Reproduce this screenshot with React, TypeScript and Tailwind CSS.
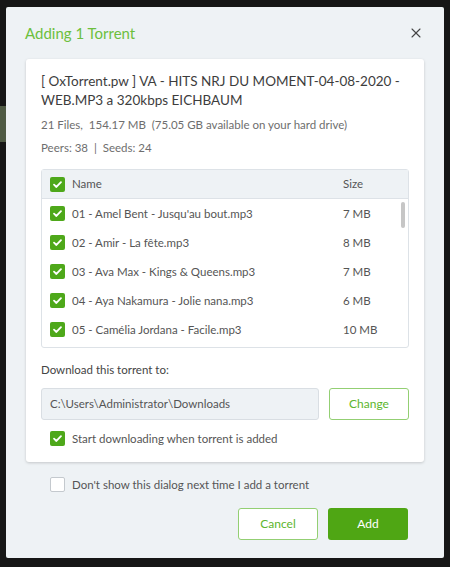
import { X } from "lucide-react";

const files = [
	{ name: "01 - Amel Bent - Jusqu'au bout.mp3", size: "7 MB" },
	{ name: "02 - Amir - La fête.mp3", size: "8 MB" },
	{ name: "03 - Ava Max - Kings & Queens.mp3", size: "7 MB" },
	{ name: "04 - Aya Nakamura - Jolie nana.mp3", size: "6 MB" },
	{ name: "05 - Camélia Jordana - Facile.mp3", size: "10 MB" },
];

const Check = ({ on = true }: { on?: boolean }) =>
	on ? (
		<span className="flex h-[15px] w-[15px] shrink-0 items-center justify-center rounded-[2px] bg-[#4ea81a]">
			<svg width="11" height="11" viewBox="0 0 12 12" fill="none">
				<path d="M2.2 6.2 4.8 8.7 9.8 3.4" stroke="white" strokeWidth="2" strokeLinecap="round" strokeLinejoin="round" />
			</svg>
		</span>
	) : (
		<span className="h-[15px] w-[15px] shrink-0 rounded-[2px] border border-[#c4c9ce] bg-white" />
	);

export default function App() {
	return (
		<div className="relative h-[567px] w-[450px] overflow-hidden bg-[#161616] font-['Lato',sans-serif]">
			{/* bit of the app behind the dialog */}
			<div className="absolute left-0 top-[106px] h-[36px] w-[6px] bg-[#4f5a44]" />

			<div className="ml-[6px] mt-[7px] flex h-[551px] w-[438px] flex-col rounded-[2px] bg-[#eef2f5]">
				<div className="flex h-[52px] items-center justify-between pl-[19px] pr-[20px]">
					<span className="text-[15px] text-[#6cbf3d]">Adding 1 Torrent</span>
					<X size={16} strokeWidth={1.6} className="text-[#444]" />
				</div>

				<div className="mx-[20px] flex h-[403px] flex-col rounded-[3px] bg-white px-[15px] pt-[13px] shadow-[0_1px_3px_rgba(0,0,0,0.18)]">
					<p className="text-[13.5px] leading-[19px] text-[#3d3d3d]">
						[ OxTorrent.pw ] VA - HITS NRJ DU MOMENT-04-08-2020 - WEB.MP3 a 320kbps EICHBAUM
					</p>
					<p className="mt-[7px] text-[11.5px] leading-[16px] text-[#6e6e6e]">
						21 Files,&nbsp; 154.17 MB &nbsp;(75.05 GB available on your hard drive)
					</p>
					<p className="mt-[7px] text-[11.5px] leading-[16px] text-[#6e6e6e]">
						Peers: 38 &nbsp;|&nbsp; Seeds: 24
					</p>

					<div className="mt-[13px] rounded-[3px] border border-[#dde2e7]">
						<div className="flex h-[29px] items-center border-b border-[#dde2e7] bg-[#eef2f5] pl-[8px] text-[11.5px] text-[#555]">
							<Check />
							<span className="ml-[7px] flex-1">Name</span>
							<span className="w-[65px]">Size</span>
						</div>
						<div className="relative h-[148px] overflow-hidden">
							{files.map((f) => (
								<div key={f.name} className="flex h-[29px] items-center pl-[8px] text-[11.5px] text-[#555]">
									<Check />
									<span className="ml-[7px] flex-1">{f.name}</span>
									<span className="w-[65px]">{f.size}</span>
								</div>
							))}
							<div className="absolute right-[3px] top-[3px] h-[26px] w-[4px] rounded-full bg-[#c6c6c6]" />
						</div>
					</div>

					<p className="mt-[14px] text-[11.5px] leading-[16px] text-[#444]">Download this torrent to:</p>
					<div className="mt-[10px] flex gap-[10px]">
						<div className="flex h-[32px] flex-1 items-center rounded-[3px] border border-[#d9dee3] bg-[#eef2f5] pl-[8px] text-[11.5px] text-[#555]">
							C:\Users\Administrator\Downloads
						</div>
						<button className="h-[32px] w-[80px] rounded-[3px] border border-[#93cf73] bg-white text-[12px] text-[#5cb52d]">
							Change
						</button>
					</div>
					<label className="ml-[9px] mt-[10px] flex items-center gap-[7px] text-[11.5px] text-[#555]">
						<Check />
						Start downloading when torrent is added
					</label>
				</div>

				<label className="ml-[44px] mt-[14px] flex items-center gap-[7px] text-[11.5px] text-[#555]">
					<Check on={false} />
					Don't show this dialog next time I add a torrent
				</label>

				<div className="mr-[36px] mt-[15px] flex justify-end gap-[10px]">
					<button className="h-[32px] w-[80px] rounded-[3px] border border-[#93cf73] bg-white text-[12px] text-[#5cb52d]">
						Cancel
					</button>
					<button className="h-[32px] w-[80px] rounded-[3px] bg-[#4fa614] text-[12px] text-white">Add</button>
				</div>
			</div>
		</div>
	);
}
